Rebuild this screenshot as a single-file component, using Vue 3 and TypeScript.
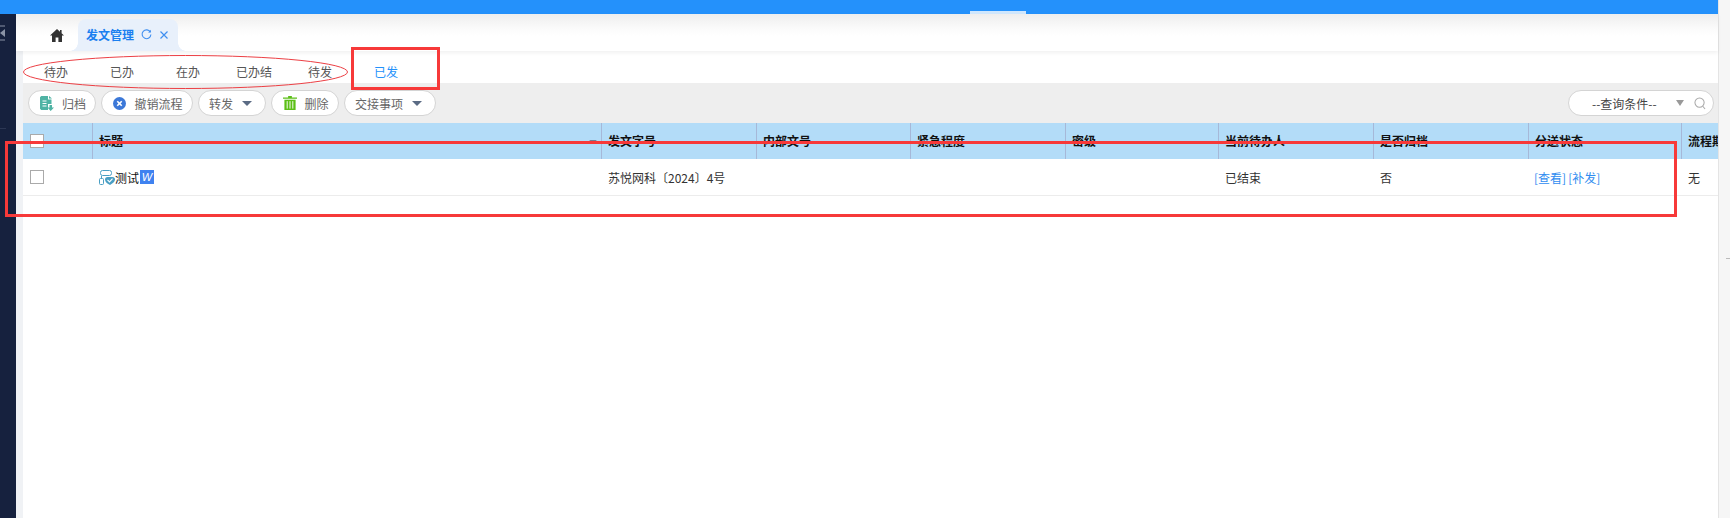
<script setup lang="ts">
const navTabs = ['待办', '已办', '在办', '已办结', '待发', '已发']
const headers = ['标题', '发文字号', '内部文号', '紧急程度', '密级', '当前待办人', '是否归档', '分送状态', '流程期限']
</script>

<template>
  <div class="page">
    <div class="app">
      <header class="topbar"><span class="top-active"></span></header>
      <div class="body">
        <aside class="sidebar">
          <svg class="collapse" width="6" height="16" viewBox="0 0 6 16">
            <path d="M0 1h5M0 15h5" stroke="#8a93a6" stroke-width="1" fill="none" />
            <path d="M5 4v8L0 8z" fill="#8a93a6" />
          </svg>
          <span class="side-line"></span>
        </aside>
        <div class="gutter"></div>
        <main class="main">
          <div class="tabbar">
            <svg class="home" width="14" height="13" viewBox="0 0 14 13">
              <path d="M7 0 0 6.6h2V13h3.6V8.6h2.8V13H12V6.6h2L11.6 4.3V1H10v1.8z" fill="#333" />
            </svg>
            <div class="tab">
              <span class="tab-title">发文管理</span>
              <svg class="tab-refresh" width="11" height="11" viewBox="0 0 12 12" fill="none">
                <path d="M10.2 3.4A4.8 4.8 0 1 0 10.8 6" stroke="#3f8ff0" stroke-width="1.2" />
                <path d="M10.8 0.8v3.1H7.7z" fill="#3f8ff0" />
              </svg>
              <svg class="tab-close" width="8" height="8" viewBox="0 0 8 8" fill="none">
                <path d="M.5.5l7 7M7.500.5l-7 7" stroke="#3f8ff0" stroke-width="1.200" />
              </svg>
            </div>
          </div>
          <div class="content">
            <nav class="nav">
              <span v-for="(t, i) in navTabs" :key="t" class="nav-item" :class="{ active: i === 5 }">{{ t }}</span>
            </nav>
            <div class="toolbar">
              <button class="btn w68 gap-lg nudge">
                <svg width="14" height="15" viewBox="0 0 14 15">
                  <path d="M0 1.200 1.200 0H8v3.500h3.500V8H8v6H1.200L0 12.800z" fill="#4fb3a4" />
                  <path d="M9 0l3 2.500H9z" fill="#4fb3a4" />
                  <path d="M2.500 5h4M2.500 7.500h4M2.500 10h4" stroke="#fff" stroke-width="1" />
                  <path d="M9.500 9h2.500v2.500h2L10.700 15 7.500 11.500h2z" fill="#4fb3a4" />
                </svg>
                <span>归档</span>
              </button>
              <button class="btn w92 gap-lg nudge">
                <svg width="13" height="13" viewBox="0 0 14 14">
                  <circle cx="7" cy="7" r="7" fill="#3c78d8" />
                  <path d="M4.600 4.600l4.800 4.800M9.400 4.600 4.600 9.400" stroke="#fff" stroke-width="1.800" />
                </svg>
                <span>撤销流程</span>
              </button>
              <button class="btn w68 drop">
                <span>转发</span><i class="caret"></i>
              </button>
              <button class="btn w68 gap-md nudge">
                <svg width="14" height="14" viewBox="0 0 15 15">
                  <path d="M5.500 0h4v1.500h5.500V3H0V1.500h5.500z" fill="#5cbf17" />
                  <path d="M1.500 4h12v11h-12z" fill="#5cbf17" />
                  <path d="M4.500 5.500v8M7.500 5.500v8M10.500 5.500v8" stroke="#fff" stroke-width="1" />
                </svg>
                <span>删除</span>
              </button>
              <button class="btn w92 drop">
                <span>交接事项</span><i class="caret"></i>
              </button>
              <div class="search">
                <span class="search-label">--查询条件--</span>
                <i class="caret grey"></i>
                <svg width="12" height="13" viewBox="0 0 13 14" fill="none">
                  <circle cx="6" cy="6" r="5" stroke="#a8a8a8" stroke-width="1.100" />
                  <path d="M9.500 10l2.500 3" stroke="#a8a8a8" stroke-width="1.100" />
                </svg>
              </div>
            </div>
            <div class="table">
              <div class="thead grid">
                <div class="cell check-cell"><span class="check"></span></div>
                <div v-for="(h, i) in headers" :key="h" class="cell th">
                  {{ h }}
                  <i v-if="i === 0" class="sort"></i>
                </div>
              </div>
              <div class="trow grid">
                <div class="cell check-cell"><span class="check"></span></div>
                <div class="cell td title-cell">
                  <svg width="16" height="15" viewBox="0 0 16 15" fill="none">
                    <rect x="1.500" y="0.500" width="11" height="5" rx="2" stroke="#4a9fc4" />
                    <rect x="0.500" y="8.500" width="4" height="6" rx="1" stroke="#4a9fc4" />
                    <path d="M2.500 8V6" stroke="#4a9fc4" />
                    <path d="M6 9.500q0-2.500 2.500-2.500h5q2.500 0 2.500 2.500t-5 5.500q-5-2.500-5-5.500z" fill="#4a9fc4" />
                    <path d="m8.500 9.800 2 2 3-3.200" stroke="#fff" stroke-width="1.200" />
                  </svg>
                  <span>测试</span>
                  <span class="word">W</span>
                </div>
                <div class="cell td">苏悦网科〔2024〕4号</div>
                <div class="cell td"></div>
                <div class="cell td"></div>
                <div class="cell td"></div>
                <div class="cell td">已结束</div>
                <div class="cell td">否</div>
                <div class="cell td links"><a>[查看]</a><a>[补发]</a></div>
                <div class="cell td">无</div>
              </div>
            </div>
          </div>
        </main>
      </div>
    </div>
    <div class="rail"><span class="rail-mark"></span></div>
    <svg class="ellipse" width="326" height="36" viewBox="0 0 326 36">
      <ellipse cx="162.500" cy="17" rx="162" ry="16.500" fill="none" stroke="#ec3f44" stroke-width="1" />
    </svg>
    <div class="mark mark-tab"></div>
    <div class="mark mark-row"></div>
  </div>
</template>

<style>
html,
body {
  margin: 0;
  overflow: hidden;
  background: #fff;
}
</style>

<style scoped>
.page {
  position: relative;
  width: 1730px;
  height: 518px;
  overflow: hidden;
  display: flex;
  font-family: "Noto Sans CJK SC", "Noto Sans", sans-serif;
  font-size: 12px;
  color: #333;
}
.app {
  flex: 0 0 1718px;
  display: flex;
  flex-direction: column;
  min-width: 0;
}
.topbar {
  flex: 0 0 14px;
  background: #2491fb;
  display: flex;
  align-items: flex-end;
  padding-left: 970px;
}
.top-active {
  width: 56px;
  height: 3px;
  background: #d0e7fd;
}
.body {
  flex: 1;
  display: flex;
  min-height: 0;
}
.sidebar {
  flex: 0 0 16px;
  background: #16213e;
  display: flex;
  flex-direction: column;
}
.collapse {
  margin-top: 11px;
}
.side-line {
  width: 6px;
  height: 1px;
  background: #2c3754;
  margin-top: 87px;
}
.gutter {
  flex: 0 0 7px;
  background: #f0f2f5;
}
.main {
  flex: 1;
  display: flex;
  flex-direction: column;
  min-width: 0;
  background: #fff;
}
.tabbar {
  flex: 0 0 37px;
  margin-left: -7px;
  display: flex;
  align-items: flex-end;
  background: linear-gradient(#eeeeee, #fbfbfb 40%, #fff 60%);
  padding-left: 34px;
  position: relative;
  z-index: 1;
  box-shadow: 0 2px 4px rgba(0, 0, 0, 0.06);
}
.home {
  margin: 0 14px 9px 0;
}
.tab {
  position: relative;
  width: 100px;
  height: 32px;
  box-sizing: border-box;
  padding: 0 0 1px 8px;
  display: flex;
  align-items: center;
  background: #e8f0fb;
  border-radius: 8px 8px 0 0;
}
.tab::before,
.tab::after {
  content: "";
  position: absolute;
  bottom: 0;
  width: 8px;
  height: 8px;
}
.tab::before {
  left: -8px;
  background: radial-gradient(circle at 0 0, #fff 7.500px, #e8f0fb 8px);
}
.tab::after {
  right: -8px;
  background: radial-gradient(circle at 100% 0, #fff 7.500px, #e8f0fb 8px);
}
.tab-title {
  color: #1a7ff0;
  font-weight: 700;
}
.tab-refresh {
  margin-left: 7px;
}
.tab-close {
  margin-left: 8px;
}
.content {
  flex: 1;
  display: flex;
  flex-direction: column;
  padding-top: 4px;
  min-height: 0;
}
.nav {
  flex: 0 0 28px;
  display: flex;
  background: #fff;
}
.nav-item {
  width: 66px;
  height: 28px;
  text-align: center;
  line-height: 33px;
  color: #555;
}
.nav-item.active {
  color: #2491fb;
}
.toolbar {
  flex: 0 0 40px;
  box-sizing: border-box;
  background: #eeeeee;
  padding: 7px 4px 0 5px;
  display: flex;
  align-items: flex-start;
  gap: 5px;
}
.btn {
  height: 26px;
  box-sizing: border-box;
  padding: 0;
  display: flex;
  align-items: center;
  justify-content: center;
  gap: 6px;
  background: #fff;
  border: 1px solid #d4d4d4;
  border-radius: 13px;
  font: inherit;
  color: #666;
}
.w68 {
  width: 68px;
}
.w92 {
  width: 92px;
}
.gap-lg {
  gap: 8px;
}
.gap-md {
  gap: 7px;
}
.nudge {
  padding-left: 2px;
}
.drop {
  justify-content: flex-start;
  padding-left: 10px;
  gap: 9px;
}
.caret {
  width: 0;
  height: 0;
  border-style: solid;
  border-width: 5px 5px 0;
  border-color: #5b6b84 transparent transparent;
}
.caret.grey {
  border-width: 6px 4.500px 0;
  border-color: #999 transparent transparent;
  margin-left: 19px;
  margin-right: 10px;
}
.search {
  margin-left: auto;
  width: 146px;
  height: 26px;
  box-sizing: border-box;
  display: flex;
  align-items: center;
  padding-left: 23px;
  background: #fff;
  border: 1px solid #d4d4d4;
  border-radius: 13px;
  color: #444;
}
.search-label {
  white-space: nowrap;
}
.table {
  flex: 1;
  overflow: hidden;
}
.grid {
  display: grid;
  grid-template-columns: 69px 509px 155px 154px 155px 153px 155px 155px 153px 37px;
}
.thead {
  height: 36px;
  background: #b3dcf8;
}
.trow {
  height: 37px;
  box-sizing: border-box;
  border-bottom: 1px solid #ececec;
}
.cell {
  display: flex;
  align-items: center;
  padding-left: 7px;
  white-space: nowrap;
  overflow: hidden;
}
.th {
  border-left: 1px solid #a6b8d8;
  padding: 0 0 2px 6px;
  font-weight: 700;
  color: #111;
  position: relative;
}
.sort {
  position: absolute;
  right: 4px;
  top: 17px;
  width: 0;
  height: 0;
  border-style: solid;
  border-width: 3px 4.500px 0;
  border-color: #6f7f94 transparent transparent;
}
.td {
  color: #333;
}
.check {
  width: 14px;
  height: 14px;
  box-sizing: border-box;
  border: 1px solid #aaa;
  background: #fff;
}
.title-cell {
  color: #111;
}
.word {
  width: 14px;
  height: 14px;
  margin-left: 1px;
  background: #3f82f0;
  color: #fff;
  font: italic 400 11px/14px "Liberation Sans", sans-serif;
  text-align: center;
}
.links {
  padding-left: 6px;
}
.links a {
  color: #2f8cf0;
  margin-right: 2px;
}
.rail {
  flex: 1;
  background: #f6f6f6;
  border-left: 1px solid #e4e4e4;
  position: relative;
}
.rail-mark {
  position: absolute;
  right: 0;
  top: 258px;
  width: 4px;
  height: 1px;
  background: #bbb;
}
.ellipse {
  position: absolute;
  z-index: 2;
  left: 23px;
  top: 55px;
}
.mark {
  position: absolute;
  z-index: 2;
  box-sizing: border-box;
  border: 3px solid #f73939;
}
.mark-tab {
  left: 351px;
  top: 47px;
  width: 89px;
  height: 43px;
}
.mark-row {
  left: 5px;
  top: 141px;
  width: 1672px;
  height: 76px;
}
</style>
